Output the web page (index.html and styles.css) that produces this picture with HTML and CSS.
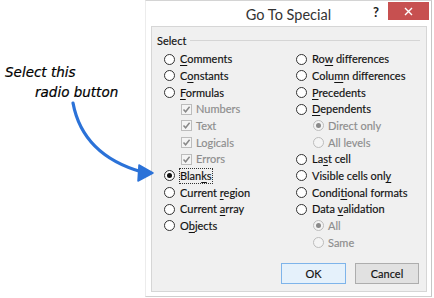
FILE: index.html
```html
<!DOCTYPE html>
<html lang="en">
<head>
<meta charset="utf-8">
<title>Go To Special</title>
<link rel="stylesheet" href="styles.css">
</head>
<body>
<div class="screen">
  <div class="note">
    <p class="note-line">Select this</p>
    <p class="note-line indent">radio button</p>
  </div>

  <div class="dialog">
    <div class="titlebar">
      <span class="title">Go To Special</span>
      <span class="help">?</span>
      <span class="close">
        <svg width="9" height="9" viewBox="0 0 9 9"><path d="M1 1L8 8M8 1L1 8" stroke="#fff" stroke-width="1.4" fill="none"/></svg>
      </span>
    </div>

    <div class="panel">
      <div class="group-head"><span class="group-label">Select</span><span class="rule"></span></div>
      <div class="cols">
        <div class="col col-left">
          <div class="row"><span class="radio"></span><span class="lbl"><u>C</u>omments</span></div>
          <div class="row"><span class="radio"></span><span class="lbl">C<u>o</u>nstants</span></div>
          <div class="row"><span class="radio"></span><span class="lbl"><u>F</u>ormulas</span></div>
          <div class="row sub off"><span class="check"><svg width="9" height="9" viewBox="0 0 9 9"><path d="M1.5 4.5L3.6 6.8L7.6 1.8" stroke="#888" stroke-width="1.5" fill="none"/></svg></span><span class="lbl">Numbers</span></div>
          <div class="row sub off"><span class="check"><svg width="9" height="9" viewBox="0 0 9 9"><path d="M1.5 4.5L3.6 6.8L7.6 1.8" stroke="#888" stroke-width="1.5" fill="none"/></svg></span><span class="lbl">Text</span></div>
          <div class="row sub off"><span class="check"><svg width="9" height="9" viewBox="0 0 9 9"><path d="M1.5 4.5L3.6 6.8L7.6 1.8" stroke="#888" stroke-width="1.5" fill="none"/></svg></span><span class="lbl">Logicals</span></div>
          <div class="row sub off"><span class="check"><svg width="9" height="9" viewBox="0 0 9 9"><path d="M1.5 4.5L3.6 6.8L7.6 1.8" stroke="#888" stroke-width="1.5" fill="none"/></svg></span><span class="lbl">Errors</span></div>
          <div class="row"><span class="radio on"></span><span class="lbl focus">Blan<u>k</u>s</span></div>
          <div class="row"><span class="radio"></span><span class="lbl">Current <u>r</u>egion</span></div>
          <div class="row"><span class="radio"></span><span class="lbl">Current <u>a</u>rray</span></div>
          <div class="row"><span class="radio"></span><span class="lbl">O<u>b</u>jects</span></div>
        </div>
        <div class="col col-right">
          <div class="row"><span class="radio"></span><span class="lbl">Ro<u>w</u> differences</span></div>
          <div class="row"><span class="radio"></span><span class="lbl">Colu<u>m</u>n differences</span></div>
          <div class="row"><span class="radio"></span><span class="lbl"><u>P</u>recedents</span></div>
          <div class="row"><span class="radio"></span><span class="lbl"><u>D</u>ependents</span></div>
          <div class="row sub off"><span class="radio on"></span><span class="lbl">Direct only</span></div>
          <div class="row sub off"><span class="radio"></span><span class="lbl">All levels</span></div>
          <div class="row"><span class="radio"></span><span class="lbl">La<u>s</u>t cell</span></div>
          <div class="row"><span class="radio"></span><span class="lbl">Visible cells onl<u>y</u></span></div>
          <div class="row"><span class="radio"></span><span class="lbl">Condi<u>t</u>ional formats</span></div>
          <div class="row"><span class="radio"></span><span class="lbl">Data <u>v</u>alidation</span></div>
          <div class="row sub off"><span class="radio on"></span><span class="lbl">All</span></div>
          <div class="row sub off"><span class="radio"></span><span class="lbl">Same</span></div>
        </div>
      </div>
      <div class="buttons">
        <span class="btn btn-default">OK</span>
        <span class="btn">Cancel</span>
      </div>
    </div>
  </div>

  <svg class="arrow" width="434" height="298" viewBox="0 0 434 298">
    <path d="M73 103C79 135 100 160 142 172" stroke="#2b72d8" stroke-width="3.2" fill="none" stroke-linecap="round"/>
    <path d="M139 165L153 173L138 181Z" fill="#2b72d8" stroke="#2b72d8" stroke-width="1.5" stroke-linejoin="round"/>
  </svg>
</div>
</body>
</html>
```

FILE: styles.css
```css
* { box-sizing: border-box; margin: 0; padding: 0; }

html, body {
  width: 434px;
  height: 298px;
  overflow: hidden;
  background: #fff;
}

body {
  font-family: Lato, "Noto Sans", sans-serif;
  font-size: 11px;
  color: #111;
}

.screen {
  position: relative;
  display: flex;
  width: 434px;
  height: 298px;
}

/* annotation */
.note {
  width: 145px;
  padding: 62px 0 0 5px;
  font-family: "DejaVu Sans", sans-serif;
  font-style: italic;
  font-size: 13.5px;
  line-height: 20px;
  color: #000;
  -webkit-text-stroke: 0.2px #000;
}

.note .indent { padding-left: 30px; }

.arrow {
  position: absolute;
  left: 0;
  top: 0;
  pointer-events: none;
}

/* dialog frame */
.dialog {
  width: 287px;
  height: 297px;
  background: #fff;
  border-top: 1px solid #d4d4d4;
  border-left: 1px solid #ececec;
  border-right: 1px solid #c6c6c6;
  border-bottom: 1px solid #cfcfcf;
  display: flex;
  flex-direction: column;
}

.titlebar {
  height: 25px;
  display: flex;
  align-items: flex-start;
  padding-left: 62px;
  padding-right: 2px;
}

.title {
  flex: 1;
  text-align: center;
  font-size: 14.5px;
  line-height: 27px;
  color: #333;
}

.help {
  width: 14px;
  margin-right: 5px;
  text-align: center;
  font-weight: 700;
  font-size: 13px;
  line-height: 22px;
  color: #222;
}

.close {
  width: 41px;
  height: 18px;
  margin-top: 1px;
  background: #c75050;
  display: flex;
  align-items: center;
  justify-content: center;
}

/* client panel */
.panel {
  margin-left: 5px;
  width: 276px;
  height: 266px;
  background: #f0f0f0;
  border: 1px solid #d6d6d6;
  padding-top: 7px;
  display: flex;
  flex-direction: column;
  -webkit-text-stroke: 0.15px currentColor;
}

.group-head {
  height: 14px;
  display: flex;
  align-items: center;
  padding-left: 5px;
  padding-right: 6px;
}

.group-label { line-height: 14px; }

.rule {
  flex: 1;
  margin-left: 4px;
  margin-top: -1px;
  border-top: 1px solid #d5d5d5;
}

.cols {
  margin-top: 3px;
  padding-left: 12px;
  display: flex;
  align-items: flex-start;
}

.col-left { width: 132px; }
.col-right { flex: 1; }

.row {
  height: 16.667px;
  display: flex;
  align-items: center;
  white-space: nowrap;
}

.row .lbl { margin-left: 5px; line-height: 14px; }
.row.sub { padding-left: 17px; }
.row.sub .lbl { margin-left: 4px; }
.row.off .lbl { color: #8d8d8d; }

u {
  text-decoration-thickness: 1px;
  text-underline-offset: 1.5px;
}

.focus {
  outline: 1px dotted #333;
  outline-offset: 0px;
}

.radio {
  position: relative;
  flex: none;
  width: 11px;
  height: 11px;
  border-radius: 50%;
  border: 1px solid #333;
  background: #fff;
}

.radio.on::after {
  content: "";
  position: absolute;
  left: 2px;
  top: 2px;
  width: 5px;
  height: 5px;
  border-radius: 50%;
  background: #111;
}

.off .radio {
  border-color: #bcbcbc;
  background: #f4f4f4;
}

.off .radio.on::after { background: #8a8a8a; }

.check {
  flex: none;
  width: 11px;
  height: 11px;
  border: 1px solid #bcbcbc;
  background: #f4f4f4;
  display: flex;
  align-items: center;
  justify-content: center;
}

/* buttons */
.buttons {
  margin-top: 12px;
  padding-right: 7px;
  display: flex;
  justify-content: flex-end;
  gap: 9px;
}

.btn {
  width: 64px;
  height: 21px;
  border: 1px solid #adadad;
  background: #e1e1e1;
  display: flex;
  align-items: center;
  justify-content: center;
  color: #111;
}

.btn-default {
  width: 65px;
  border-color: #7eb4ea;
  background: #e5f1fb;
}
```
